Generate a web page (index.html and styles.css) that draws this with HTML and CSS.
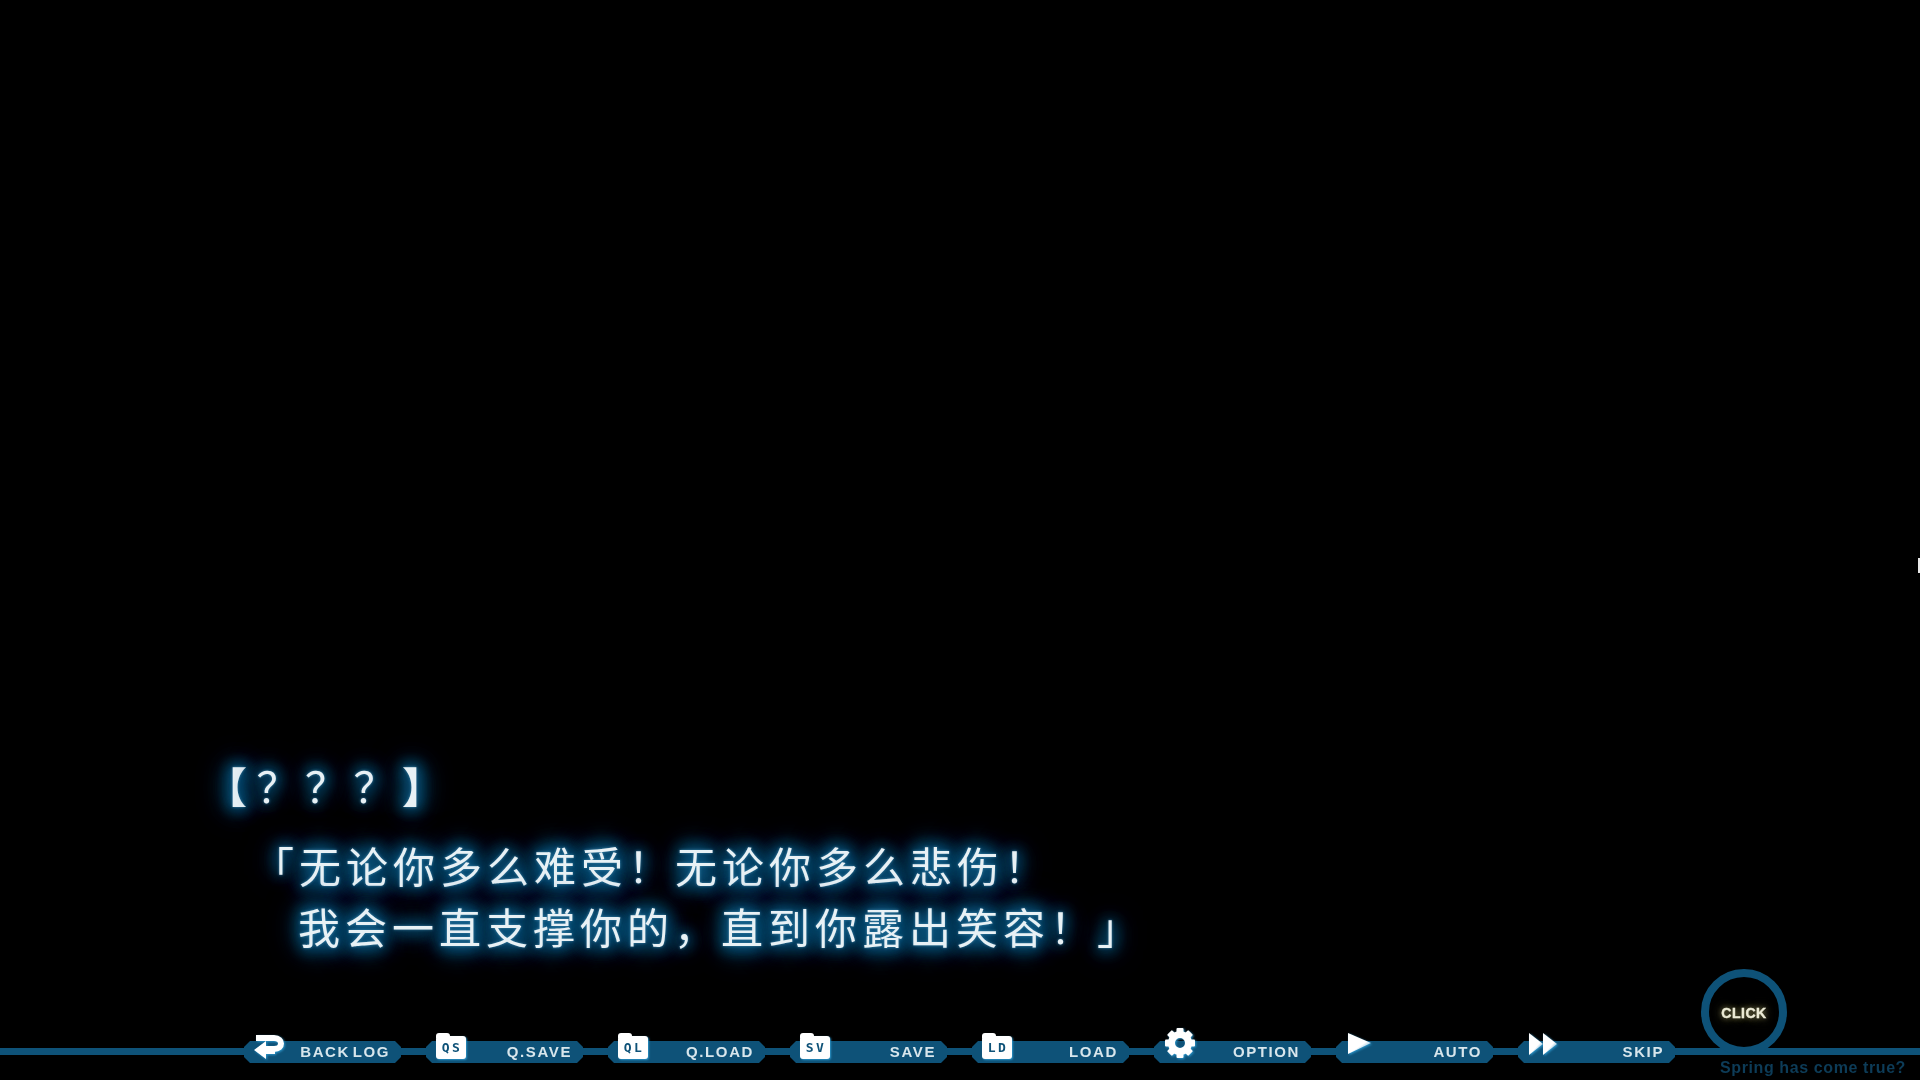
FILE: index.html
```html
<!DOCTYPE html>
<html lang="zh-CN">
<head>
    <meta charset="UTF-8">
    <title>Spring has come true?</title>
    <link rel="stylesheet" href="styles.css">
</head>
<body>
    <div class="screen">
        <div class="message">
            <div class="speaker"><span class="bracket bracket-open">【</span>？？？<span class="bracket">】</span></div>
            <p class="line">「无论你多么难受！无论你多么悲伤！</p>
            <p class="line line-indent">我会一直支撑你的，直到你露出笑容！」</p>
        </div>

        <div class="toolbar">
            <div class="tool">
                <svg class="icon icon-back" viewBox="0 0 31 26">
                    <path d="M3 4H21C26 4 28 7 28 9.500C28 12.500 26 15 21 15H13" fill="none" stroke="#fff" stroke-width="6"/>
                    <path d="M13 7L1 16L13 25V20H22V12H13Z" fill="#fff"/>
                </svg>
                <span class="tool-name">BACK LOG</span>
            </div>
            <div class="tool">
                <div class="folder"><span>QS</span></div>
                <span class="tool-name">Q.SAVE</span>
            </div>
            <div class="tool">
                <div class="folder"><span>QL</span></div>
                <span class="tool-name">Q.LOAD</span>
            </div>
            <div class="tool">
                <div class="folder"><span>SV</span></div>
                <span class="tool-name">SAVE</span>
            </div>
            <div class="tool">
                <div class="folder"><span>LD</span></div>
                <span class="tool-name">LOAD</span>
            </div>
            <div class="tool">
                <svg class="icon icon-gear" viewBox="0 0 32 32">
                    <circle cx="16" cy="16" r="8.500" fill="none" stroke="#fff" stroke-width="7"/>
                    <rect x="12.500" y="1" width="7" height="6" rx="1" fill="#fff"/>
                    <rect x="12.500" y="1" width="7" height="6" rx="1" fill="#fff" transform="rotate(45 16 16)"/>
                    <rect x="12.500" y="1" width="7" height="6" rx="1" fill="#fff" transform="rotate(90 16 16)"/>
                    <rect x="12.500" y="1" width="7" height="6" rx="1" fill="#fff" transform="rotate(135 16 16)"/>
                    <rect x="12.500" y="1" width="7" height="6" rx="1" fill="#fff" transform="rotate(180 16 16)"/>
                    <rect x="12.500" y="1" width="7" height="6" rx="1" fill="#fff" transform="rotate(225 16 16)"/>
                    <rect x="12.500" y="1" width="7" height="6" rx="1" fill="#fff" transform="rotate(270 16 16)"/>
                    <rect x="12.500" y="1" width="7" height="6" rx="1" fill="#fff" transform="rotate(315 16 16)"/>
                </svg>
                <span class="tool-name">OPTION</span>
            </div>
            <div class="tool">
                <svg class="icon icon-play" viewBox="0 0 23 21">
                    <defs>
                        <linearGradient id="fade" x1="0.300" y1="0.300" x2="0.800" y2="1">
                            <stop offset="0.450" stop-color="#fff"/>
                            <stop offset="1" stop-color="#1f7fb4"/>
                        </linearGradient>
                    </defs>
                    <path d="M0 0L23 10L0 21Z" fill="url(#fade)"/>
                </svg>
                <span class="tool-name">AUTO</span>
            </div>
            <div class="tool">
                <svg class="icon icon-skip" viewBox="0 0 28 22">
                    <path d="M0 0L14 11L0 22Z" fill="url(#fade)"/>
                    <path d="M14 0L28 11L14 22Z" fill="url(#fade)"/>
                </svg>
                <span class="tool-name">SKIP</span>
            </div>
        </div>

        <div class="tagline">Spring has come true?</div>

        <div class="click-ring"><span>CLICK</span></div>
        <div class="edge-mark"></div>
    </div>
</body>
</html>
```

FILE: styles.css
```css
html, body {
    margin: 0;
    background-color: #000;
}
.screen {
    position: relative;
    width: 1920px;
    height: 1080px;
    overflow: hidden;
    background-color: #000;
    font-family: "Noto Sans CJK SC", "Noto Sans", sans-serif;
    color: #e8f1f5;
    filter: blur(0.5px);
}
.message {
    height: 1041px;
    box-sizing: border-box;
    padding: 754px 0 0 208px;
    text-shadow: 0 0 3px #3f86ab, 0 0 14px #0c5a86, 0 0 16px #0c5a86, 0 0 18px #0c5a86, 0 0 24px #0b5580, 0 0 30px #0b5580, 0 0 36px #0a4a70;
}
.speaker {
    margin-bottom: 19px;
    font-size: 42px;
    line-height: 61px;
    letter-spacing: 6.500px;
}
.bracket {
    font-weight: bold;
}
.bracket-open {
    margin-left: -3px;
    letter-spacing: 9.500px;
}
.line {
    margin: 0;
    padding-left: 44px;
    font-size: 42px;
    line-height: 61px;
    letter-spacing: 5px;
}
.line-indent {
    padding-left: 90px;
}
.toolbar {
    position: relative;
    display: flex;
    gap: 25px;
    height: 22px;
    padding-left: 244px;
    align-items: center;
}
.toolbar::before {
    content: "";
    position: absolute;
    left: 0;
    right: 0;
    top: 7px;
    height: 7px;
    background-color: #0e5278;
}
.tool {
    position: relative;
    flex: none;
    display: flex;
    justify-content: flex-end;
    align-items: center;
    width: 157px;
    height: 22px;
    box-sizing: border-box;
    padding: 0 11px 2px 0;
}
.tool::before {
    content: "";
    position: absolute;
    inset: 0;
    background-color: #0e5278;
    clip-path: polygon(6px 0, 151px 0, 157px 6px, 157px 16px, 151px 22px, 6px 22px, 0 16px, 0 6px);
}
.tool-name {
    position: relative;
    font-family: "Liberation Sans", Arial, sans-serif;
    font-size: 15px;
    font-weight: bold;
    letter-spacing: 1.600px;
    word-spacing: -3px;
    color: #d8e6ec;
}
.icon {
    position: absolute;
    filter: drop-shadow(1px 1px 1px #2b94c9);
}
.icon-back {
    left: 9px;
    top: -7px;
    width: 31px;
    height: 26px;
}
.icon-gear {
    left: 10px;
    top: -14px;
    width: 32px;
    height: 32px;
}
.icon-play {
    left: 12px;
    top: -8px;
    width: 23px;
    height: 21px;
}
.icon-skip {
    left: 11px;
    top: -8px;
    width: 28px;
    height: 22px;
}
.folder {
    position: absolute;
    left: 10px;
    top: -5px;
    width: 30px;
    height: 23px;
    border-radius: 3px;
    background-color: #fff;
    box-shadow: 1px 1px 2px #2b94c9;
    display: flex;
    justify-content: center;
    align-items: center;
}
.folder::before {
    content: "";
    position: absolute;
    left: 0;
    top: -3px;
    width: 14px;
    height: 5px;
    border-radius: 3px 3px 0 0;
    background-color: #fff;
}
.folder span {
    position: relative;
    font-family: "DejaVu Sans Mono", monospace;
    font-size: 13px;
    font-weight: bold;
    letter-spacing: 2.500px;
    margin-right: -2px;
    color: #0e5278;
}
.tagline {
    margin-top: -4px;
    padding-right: 14px;
    text-align: right;
    font-family: "Liberation Sans", Arial, sans-serif;
    font-size: 16px;
    font-weight: bold;
    line-height: 17px;
    letter-spacing: 0.600px;
    color: #0d3c58;
}
.click-ring {
    position: absolute;
    left: 1701px;
    top: 969px;
    width: 86px;
    height: 86px;
    box-sizing: border-box;
    border: 8px solid #0e5278;
    border-radius: 50%;
    display: flex;
    justify-content: center;
    align-items: center;
}
.click-ring span {
    position: relative;
    top: 1px;
    font-family: "Liberation Sans", Arial, sans-serif;
    font-size: 14px;
    font-weight: bold;
    letter-spacing: 0.500px;
    color: #ecebd6;
    -webkit-text-stroke: 0.4px #ecebd6;
    text-shadow: 0 0 5px #77744a, 0 0 10px #66633f, 0 0 14px #44422c;
}
.edge-mark {
    position: absolute;
    right: 0;
    top: 558px;
    width: 2px;
    height: 15px;
    background-color: #e8e8e8;
}
```
